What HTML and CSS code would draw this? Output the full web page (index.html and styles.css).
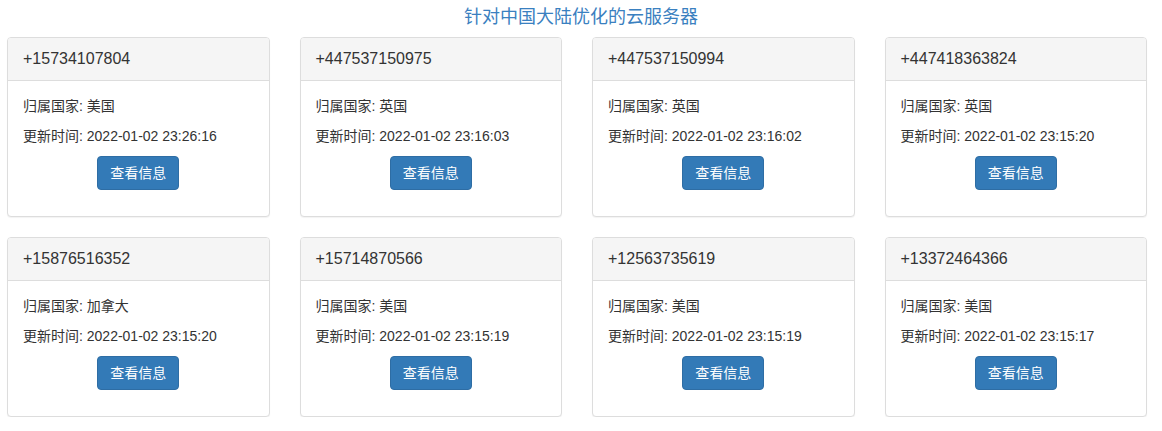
FILE: index.html
```html
<!DOCTYPE html>
<html lang="zh-CN">
<head>
<meta charset="utf-8">
<title>针对中国大陆优化的云服务器</title>
<link rel="stylesheet" href="styles.css">
</head>
<body>
<h1 class="title">针对中国大陆优化的云服务器</h1>
<div class="grid">
  <div class="panel">
    <div class="panel-heading">+15734107804</div>
    <div class="panel-body">
      <p>归属国家: 美国</p>
      <p>更新时间: 2022-01-02 23:26:16</p>
      <p class="actions"><a class="btn">查看信息</a></p>
    </div>
  </div>
  <div class="panel">
    <div class="panel-heading">+447537150975</div>
    <div class="panel-body">
      <p>归属国家: 英国</p>
      <p>更新时间: 2022-01-02 23:16:03</p>
      <p class="actions"><a class="btn">查看信息</a></p>
    </div>
  </div>
  <div class="panel">
    <div class="panel-heading">+447537150994</div>
    <div class="panel-body">
      <p>归属国家: 英国</p>
      <p>更新时间: 2022-01-02 23:16:02</p>
      <p class="actions"><a class="btn">查看信息</a></p>
    </div>
  </div>
  <div class="panel">
    <div class="panel-heading">+447418363824</div>
    <div class="panel-body">
      <p>归属国家: 英国</p>
      <p>更新时间: 2022-01-02 23:15:20</p>
      <p class="actions"><a class="btn">查看信息</a></p>
    </div>
  </div>
  <div class="panel">
    <div class="panel-heading">+15876516352</div>
    <div class="panel-body">
      <p>归属国家: 加拿大</p>
      <p>更新时间: 2022-01-02 23:15:20</p>
      <p class="actions"><a class="btn">查看信息</a></p>
    </div>
  </div>
  <div class="panel">
    <div class="panel-heading">+15714870566</div>
    <div class="panel-body">
      <p>归属国家: 美国</p>
      <p>更新时间: 2022-01-02 23:15:19</p>
      <p class="actions"><a class="btn">查看信息</a></p>
    </div>
  </div>
  <div class="panel">
    <div class="panel-heading">+12563735619</div>
    <div class="panel-body">
      <p>归属国家: 美国</p>
      <p>更新时间: 2022-01-02 23:15:19</p>
      <p class="actions"><a class="btn">查看信息</a></p>
    </div>
  </div>
  <div class="panel">
    <div class="panel-heading">+13372464366</div>
    <div class="panel-body">
      <p>归属国家: 美国</p>
      <p>更新时间: 2022-01-02 23:15:17</p>
      <p class="actions"><a class="btn">查看信息</a></p>
    </div>
  </div>
</div>
</body>
</html>
```
FILE: styles.css
```css
* { box-sizing: border-box; }
html, body {
  margin: 0;
  padding: 0;
  background: #fff;
}
body {
  font-family: "Liberation Sans", Arial, "Noto Sans CJK SC", sans-serif;
  font-size: 14px;
  line-height: 20px;
  color: #333;
}
.title {
  margin: 0;
  padding-top: 7px;
  height: 37px;
  font-size: 18px;
  line-height: 20px;
  font-weight: normal;
  text-align: center;
  color: #3a80c0;
}
.grid {
  display: grid;
  grid-template-columns: repeat(4, 1fr);
  column-gap: 30px;
  row-gap: 20px;
  width: 1147px;
  padding-left: 7px;
}
.panel {
  background: #fff;
  border: 1px solid #ddd;
  border-radius: 4px;
  box-shadow: 0 1px 1px rgba(0,0,0,.05);
}
.panel-heading {
  background: #f5f5f5;
  border-bottom: 1px solid #ddd;
  border-radius: 3px 3px 0 0;
  padding: 10px 15px;
  height: 43px;
  font-size: 16px;
  line-height: 22px;
  color: #333;
}
.panel-body {
  padding: 15px 15px 16px;
}
.panel-body p {
  margin: 0 0 10px;
}
.actions {
  text-align: center;
}
.btn {
  display: inline-block;
  padding: 6px 12px;
  font-size: 14px;
  line-height: 20px;
  color: #fff;
  background: #337ab7;
  border: 1px solid #2e6da4;
  border-radius: 4px;
  text-decoration: none;
  cursor: pointer;
}
```
